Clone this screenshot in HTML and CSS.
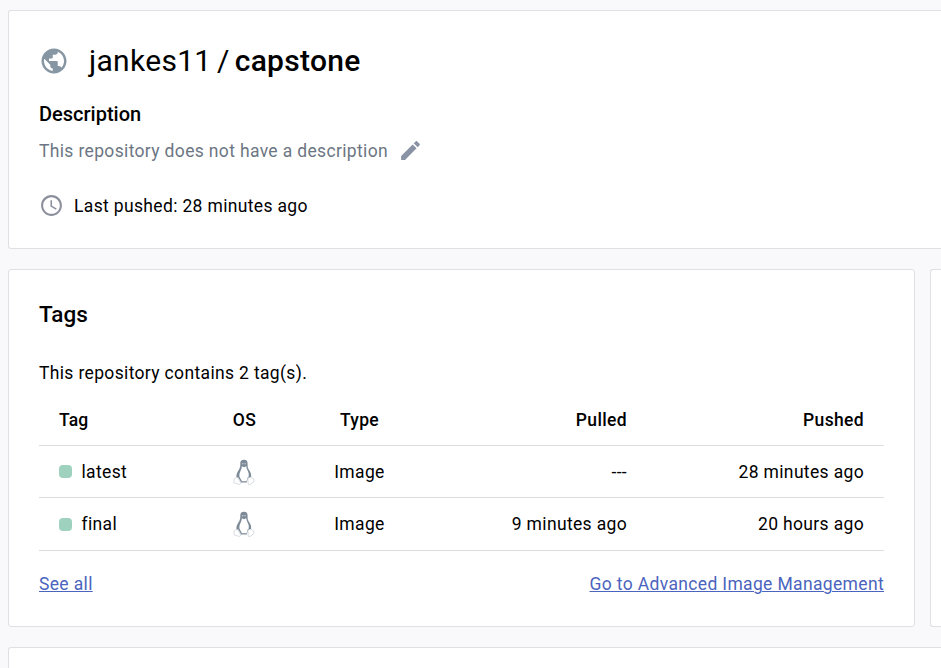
FILE: index.html
```html
<!DOCTYPE html>
<html lang="en">
<head>
<meta charset="utf-8">
<title>jankes11/capstone</title>
<link rel="stylesheet" href="styles.css">
</head>
<body>
<svg class="defs" width="0" height="0" aria-hidden="true">
  <symbol id="tux" viewBox="0 0 22 26">
    <path class="tux-edge" d="M1.200 19.800l3-1.800 3.600 6.300-1.600 1.200-5.200-1.800zM20.800 20.200l-3.200-2.600-2.700 1.600.3 6 1.900.4 3.900-3.200z"/>
    <path class="tux-body" d="M11 .8C8.200.8 7.200 2.500 7.300 4.600c.1 2.600-.2 4.200-1.600 6.500-1.200 2-2.500 4.300-2.300 7l1.900.5 2.900 4.900h5.500l1.200-4.700 3.200-.8c.4-2.800-.8-5.300-2.200-7.300-1.400-2-1.300-3.500-1.300-6C14.600 2.400 13.700.8 11 .8z"/>
    <path class="tux-belly" d="M8.800 7.200l2.200 1 2.200-1c.3 1.900 1.100 3.400 1.900 5.400.8 2 .8 3.600.5 5.200l-1 .8-1 3.700H8.900l-2.400-4.500c-.5-2.200.3-4.200 1.200-6.200.7-1.700 1-2.700 1.100-4.400z"/>
    <path class="tux-belly" d="M9.300 4.300h.9v1h-.9zM11.600 4.300h.9v1h-.9z"/>
  </symbol>
</svg>
<main class="page">
  <section class="card summary">
    <div class="title-row">
      <svg class="globe" viewBox="0 0 24 24"><path d="M12 2C6.480 2 2 6.480 2 12s4.480 10 10 10 10-4.480 10-10S17.520 2 12 2zm-1 17.930c-3.950-.49-7-3.850-7-7.930 0-.62.08-1.210.21-1.790L9 15v1c0 1.100.9 2 2 2v1.930zm6.900-2.540c-.26-.81-1-1.390-1.900-1.390h-1v-3c0-.55-.45-1-1-1H8v-2h2c.55 0 1-.45 1-1V7h2c1.100 0 2-.9 2-2v-.41c2.930 1.190 5 4.060 5 7.410 0 2.080-.8 3.970-2.100 5.390z"/></svg>
      <h1 class="title">jankes11<span class="slash">/</span><strong>capstone</strong></h1>
    </div>
    <h2 class="label">Description</h2>
    <div class="description">
      <span>This repository does not have a description</span>
      <svg class="pencil" viewBox="0 0 24 24"><path d="M3 17.250V21h3.750L17.810 9.940l-3.750-3.750L3 17.250zM20.710 7.040c.39-.39.39-1.020 0-1.410l-2.340-2.340c-.39-.39-1.020-.39-1.410 0l-1.830 1.830 3.750 3.750 1.830-1.830z"/></svg>
    </div>
    <div class="pushed">
      <svg class="clock" viewBox="0 0 24 24"><path d="M11.990 2C6.470 2 2 6.480 2 12s4.470 10 9.990 10C17.520 22 22 17.520 22 12S17.520 2 11.990 2zM12 20c-4.420 0-8-3.580-8-8s3.580-8 8-8 8 3.580 8 8-3.580 8-8 8zm.5-13H11v6l5.250 3.150.75-1.230-4.500-2.670z"/></svg>
      <span>Last pushed: 28 minutes ago</span>
    </div>
  </section>
  <div class="columns">
    <section class="card tags">
      <h2 class="tags-title">Tags</h2>
      <p class="count">This repository contains 2 tag(s).</p>
      <table class="tag-table">
        <colgroup><col class="c-tag"><col class="c-os"><col class="c-type"><col class="c-pulled"><col class="c-pushed"></colgroup>
        <thead>
          <tr><th class="left">Tag</th><th>OS</th><th>Type</th><th class="right">Pulled</th><th class="right">Pushed</th></tr>
        </thead>
        <tbody>
          <tr><td class="left"><span class="tag"><i class="dot"></i>latest</span></td><td class="os"><svg class="tux"><use href="#tux"/></svg></td><td>Image</td><td class="right">---</td><td class="right">28 minutes ago</td></tr>
          <tr><td class="left"><span class="tag"><i class="dot"></i>final</span></td><td class="os"><svg class="tux"><use href="#tux"/></svg></td><td>Image</td><td class="right">9 minutes ago</td><td class="right">20 hours ago</td></tr>
        </tbody>
      </table>
      <div class="links"><a href="#">See all</a><a href="#">Go to Advanced Image Management</a></div>
    </section>
    <aside class="card side"></aside>
  </div>
  <section class="card readme"></section>
</main>
</body>
</html>
```
FILE: styles.css
```css
* { box-sizing: border-box; }
body {
  margin: 0;
  background: #f9f9fb;
  color: #000;
  font: 400 17.5px/24px Roboto, sans-serif;
  letter-spacing: 0.345px;
}
h1, h2, p { margin: 0; }
.defs { display: block; }
.page { height: 668px; padding: 10px 0 0 8px; display: flex; flex-direction: column; gap: 20px; }
.card { background: #fff; border: 1px solid #dfe0e4; border-radius: 3px; }
.summary { flex: none; height: 239px; padding: 30px 30px 0; border-right: 0; border-radius: 3px 0 0 3px; }
.title-row { display: flex; align-items: center; height: 40px; }
.globe { width: 30px; height: 30px; fill: #8796a3; margin-right: 20px; }
.title { font-size: 30px; line-height: 40px; font-weight: 400; letter-spacing: 0.3px; white-space: nowrap; }
.title strong { font-weight: 500; }
.slash { margin: 0 5px 0 5.500px; }
.label { margin-top: 21px; font-size: 20px; line-height: 24px; font-weight: 500; letter-spacing: 0; }
.description { margin-top: 12px; display: flex; align-items: center; color: #6c7683; }
.pencil { width: 25px; height: 25px; margin-left: 10px; fill: #8993a5; }
.pushed { margin-top: 30px; display: flex; align-items: center; }
.clock { width: 25px; height: 25px; margin-right: 10px; fill: #8b8f9c; }
.columns { flex: none; display: grid; grid-template-columns: 907px 1fr; gap: 15px; height: 358px; }
.side { border-right: 0; border-radius: 3px 0 0 3px; }
.tags { padding: 29px 30px 0; }
.tags-title { font-size: 22.5px; line-height: 30px; font-weight: 500; letter-spacing: 0; }
.count { margin-top: 32px; }
.tag-table { margin-top: 9px; width: 845px; table-layout: fixed; border-collapse: separate; border-spacing: 0; }
.c-tag { width: 165px; }
.c-os { width: 81px; }
.c-type { width: 149px; }
.c-pulled { width: 213px; }
.c-pushed { width: 237px; }
th, td { height: 52px; padding: 0; text-align: center; vertical-align: middle; border-bottom: 1px solid #dcdddf; }
tbody tr:last-child td { height: 53px; }
th { font-weight: 500; }
th.left { letter-spacing: 0.2px; }
.os { padding-right: 1px; }
.left { text-align: left; padding-left: 20px; }
.right { text-align: right; padding-right: 20px; }
.tag { display: flex; align-items: center; gap: 9.500px; }
.dot { width: 13px; height: 13px; border-radius: 4px; background: #9ed2bf; }
.tux { display: block; width: 22px; height: 26px; margin: 0 auto; }
.tux-body { fill: #7d8a97; }
.tux-belly { fill: #fff; }
.tux-edge { fill: #fff; stroke: #cdd3da; stroke-width: .8; stroke-linejoin: round; }
.links { margin-top: 21px; display: flex; justify-content: space-between; }
.links a { color: #4b64bd; text-underline-offset: 1px; text-decoration-thickness: 1px; }
.readme { flex: 1; border-right: 0; border-bottom: 0; border-radius: 3px 0 0 0; }
```
